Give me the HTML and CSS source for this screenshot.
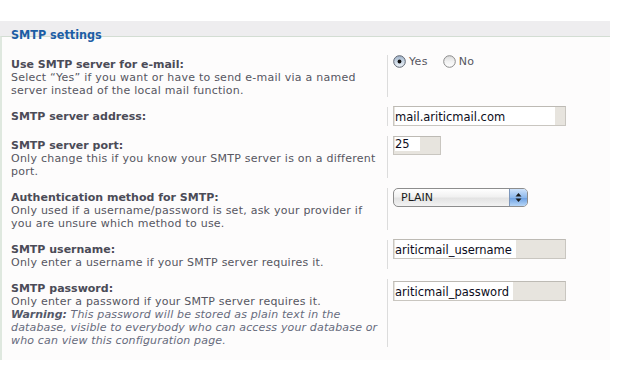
FILE: index.html
```html
<!DOCTYPE html>
<html>
<head>
<meta charset="utf-8">
<title>SMTP settings</title>
<link rel="stylesheet" href="styles.css">
</head>
<body>
<div class="page">
  <div class="band"></div>
  <div class="panel">
    <h2 class="legend">SMTP settings</h2>
    <div class="rows">
      <div class="row">
        <div class="desc"><b class="label">Use SMTP server for e-mail:</b><br>Select “Yes” if you want or have to send e-mail via a named<br>server instead of the local mail function.</div>
        <div class="ctl">
          <div class="radios">
            <span class="radio">
              <svg width="13" height="13" viewBox="0 0 13 13"><defs><linearGradient id="rs" x1="0" y1="0" x2="0" y2="1"><stop offset="0" stop-color="#9fb2c8"/><stop offset="0.5" stop-color="#c9d6e4"/><stop offset="1" stop-color="#eef3f8"/></linearGradient></defs><circle cx="6.5" cy="6.5" r="5.8" fill="url(#rs)" stroke="#5d6470" stroke-width="1"/><circle cx="6.5" cy="6.5" r="1.9" fill="#111"/></svg>
              <span class="rlabel">Yes</span>
            </span>
            <span class="radio">
              <svg width="13" height="13" viewBox="0 0 13 13"><defs><linearGradient id="ru" x1="0" y1="0" x2="0" y2="1"><stop offset="0" stop-color="#d9d9d9"/><stop offset="0.5" stop-color="#f2f2f2"/><stop offset="1" stop-color="#ffffff"/></linearGradient></defs><circle cx="6.5" cy="6.5" r="5.8" fill="url(#ru)" stroke="#8a8a8a" stroke-width="1"/></svg>
              <span class="rlabel">No</span>
            </span>
          </div>
        </div>
      </div>
      <div class="row">
        <div class="desc"><b class="label">SMTP server address:</b></div>
        <div class="ctl"><div class="field wide"><span class="val pad-address">mail.ariticmail.com</span></div></div>
      </div>
      <div class="row">
        <div class="desc"><b class="label">SMTP server port:</b><br>Only change this if you know your SMTP server is on a different<br>port.</div>
        <div class="ctl"><div class="field narrow"><span class="val pad-port">25</span></div></div>
      </div>
      <div class="row">
        <div class="desc"><b class="label">Authentication method for SMTP:</b><br>Only used if a username/password is set, ask your provider if<br>you are unsure which method to use.</div>
        <div class="ctl">
          <div class="select">
            <span class="sel-text">PLAIN</span>
            <span class="sel-arrows"><svg width="7" height="11" viewBox="0 0 7 11"><path d="M3.5 1 L6.5 4.5 L0.5 4.5 Z" fill="#1a1a1a"/><path d="M3.5 10 L6.5 6.5 L0.5 6.5 Z" fill="#1a1a1a"/></svg></span>
          </div>
        </div>
      </div>
      <div class="row">
        <div class="desc"><b class="label">SMTP username:</b><br>Only enter a username if your SMTP server requires it.</div>
        <div class="ctl"><div class="field wide"><span class="val pad-small">ariticmail_username</span></div></div>
      </div>
      <div class="row">
        <div class="desc"><b class="label">SMTP password:</b><br>Only enter a password if your SMTP server requires it.<br><em class="warn"><b>Warning:</b> This password will be stored as plain text in the<br>database, visible to everybody who can access your database or<br>who can view this configuration page.</em></div>
        <div class="ctl"><div class="field wide pw"><span class="val pad-small">ariticmail_password</span></div></div>
      </div>
    </div>
  </div>
</div>
</body>
</html>
```

FILE: styles.css
```css
html, body {
  margin: 0;
  padding: 0;
  background: #ffffff;
}

.page {
  padding-top: 21px;
  width: 610px;
  font-family: "DejaVu Sans", Verdana, sans-serif;
}

.band {
  height: 15px;
  background: #eeedef;
}

.panel {
  border-top: 1px solid #d3ddd3;
  border-left: 2px solid #dfe8df;
  background: #fdfcfc;
  padding: 0 0 13px 9px;
}

.legend {
  margin: -9px 0 0 0;
  font-family: "DejaVu Sans Condensed", "DejaVu Sans", sans-serif;
  font-size: 12.5px;
  line-height: 14px;
  font-weight: bold;
  color: #1c5da5;
}

.rows {
  margin-top: 13px;
  display: flex;
  flex-direction: column;
  gap: 10px;
}

.row {
  display: flex;
  align-items: stretch;
}

.desc {
  width: 376px;
  flex: none;
  padding-top: 3px;
  font-size: 11px;
  line-height: 13px;
  color: #565661;
  letter-spacing: 0.24px;
  white-space: nowrap;
}

.label {
  color: #4b4b57;
  font-weight: bold;
  letter-spacing: 0;
}

.warn {
  font-style: italic;
  color: #676b7d;
  letter-spacing: 0.15px;
}

.warn b {
  color: #535868;
  letter-spacing: 0;
}

.ctl {
  border-left: 1px solid #dcdcdc;
  padding-left: 5px;
}

.radios {
  display: flex;
  gap: 15px;
  font-size: 11px;
  line-height: 13px;
  letter-spacing: 0.3px;
  color: #565661;
}

.radio {
  display: flex;
  align-items: center;
  gap: 3px;
}

.radio svg {
  display: block;
}

.field {
  box-sizing: border-box;
  height: 20px;
  border: 1px solid #c9c6c0;
  border-top-color: #bdbab4;
  background: #e7e4de;
  padding-left: 1px;
  font-size: 11.5px;
  color: #0c0c20;
}

.field.wide {
  width: 173px;
  margin-top: -1px;
}

.field.narrow {
  width: 48px;
  height: 19px;
}

.field.pw {
  margin-top: 2px;
}

.val {
  display: inline-block;
  background: #ffffff;
  height: 18px;
  line-height: 20px;
}

.pad-address { padding-right: 50px; }
.pad-small { padding-right: 4px; }
.pad-port { padding-right: 10px; height: 14px; line-height: 15px; }

.select {
  box-sizing: border-box;
  width: 135px;
  height: 19px;
  border: 1px solid #8d8d8d;
  border-radius: 5px;
  background: linear-gradient(#ffffff, #f1f1f1 45%, #e3e3e3 55%, #f3f3f3);
  display: flex;
  align-items: center;
  justify-content: space-between;
  overflow: hidden;
  font-size: 11px;
  color: #1a1a1a;
}

.sel-text {
  padding-left: 7px;
}

.sel-arrows {
  width: 17px;
  align-self: stretch;
  display: flex;
  align-items: center;
  justify-content: center;
  background: linear-gradient(#cfe3fb, #8db8ec 50%, #6fa2e3 55%, #b7d6f7);
  border-left: 1px solid #7d97bb;
}
```
